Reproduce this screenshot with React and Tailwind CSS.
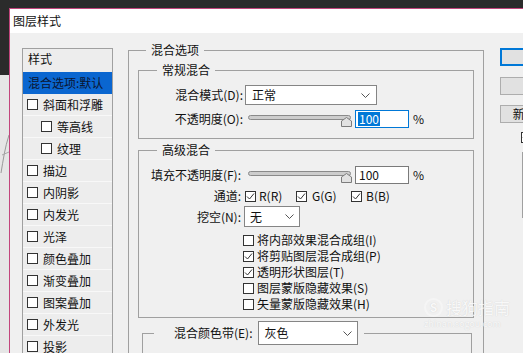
import React from 'react';

const Check = ({ checked, className = '' }) => (
  <span
    className={`w-[11px] h-[11px] shrink-0 border border-[#333] bg-white flex items-center justify-center ${className}`}
  >
    {checked && (
      <svg width="9" height="9" viewBox="0 0 9 9">
        <path d="M1 4.5 L3.5 7 L8 1.5" fill="none" stroke="#333" strokeWidth="1" />
      </svg>
    )}
  </span>
);

const Chevron = () => (
  <svg width="9" height="5" viewBox="0 0 9 5" className="shrink-0">
    <path d="M0.5 0.5 L4.5 4.5 L8.5 0.5" fill="none" stroke="#555" strokeWidth="1" />
  </svg>
);

const Select = ({ text, className = '' }) => (
  <div
    className={`shrink-0 border border-[#858585] bg-white flex items-center justify-between pl-[5px] pr-[5px] ${className}`}
  >
    <span>{text}</span>
    <Chevron />
  </div>
);

const Slider = () => (
  <div className="relative ml-[5px] w-[105px] h-[18px] shrink-0">
    <div className="absolute left-0 top-[5px] w-[103px] h-[5px] rounded-full border border-[#8a8a8a] bg-[#cdcdcd]" />
    <svg width="11" height="10" viewBox="0 0 11 10" className="absolute left-[93px] top-[7px]">
      <path d="M0.5 4 L5.5 0.5 L10.5 4 V9.5 H0.5 Z" fill="#e2e2e2" stroke="#7c7c7c" strokeWidth="1" />
    </svg>
  </div>
);

const listItems = [
  { label: '斜面和浮雕' },
  { label: '等高线', sub: true },
  { label: '纹理', sub: true },
  { label: '描边' },
  { label: '内阴影' },
  { label: '内发光' },
  { label: '光泽' },
  { label: '颜色叠加' },
  { label: '渐变叠加' },
  { label: '图案叠加' },
  { label: '外发光' },
  { label: '投影' },
];

const StyleList = () => (
  <div className="ml-[12px] mt-[15px] w-[91px] h-[400px] shrink-0 border border-[#a0a0a0] bg-[#ededed]">
    <div className="h-[23px] flex items-start pt-[2px] pl-[5px]">样式</div>
    <div className="h-[22px] flex items-center pl-[5px] bg-[#0a66d0] text-[#0a1530]">混合选项:默认</div>
    {listItems.map(({ label, sub }) => (
      <div
        key={label}
        className={`h-[22px] flex items-center border-b border-[#f8f8f8] ${sub ? 'pl-[18px]' : 'pl-[4px]'}`}
      >
        <Check />
        <span className="ml-[5px]">{label}</span>
      </div>
    ))}
  </div>
);

const advancedChecks = [
  { label: '将内部效果混合成组(I)', checked: false },
  { label: '将剪贴图层混合成组(P)', checked: true },
  { label: '透明形状图层(T)', checked: true },
  { label: '图层蒙版隐藏效果(S)', checked: false },
  { label: '矢量蒙版隐藏效果(H)', checked: false },
];

const MainPanel = () => (
  <fieldset className="ml-[15px] mt-[9px] w-[356px] h-[330px] shrink-0 border border-[#a0a0a0]">
    <legend className="ml-[17px] px-[5px]">混合选项</legend>

    <fieldset className="mx-[9px] mt-[4px] pb-[10px] border border-[#a0a0a0]">
      <legend className="ml-[18px] px-[5px]">常规混合</legend>
      <div className="mt-[7px] h-[20px] flex items-center">
        <span className="w-[104px] shrink-0 text-right">混合模式(D):</span>
        <Select text="正常" className="ml-[2px] w-[132px] h-[20px] pl-[6px] pr-[6px]" />
      </div>
      <div className="mt-[5px] h-[18px] flex items-center">
        <span className="w-[104px] shrink-0 text-right">不透明度(O):</span>
        <Slider />
        <div className="ml-[2px] w-[54px] h-[18px] shrink-0 border border-[#0078d7] bg-white flex items-center pl-[2px]">
          <span className="bg-[#0078d7] text-white px-[1px] leading-[14px]">100</span>
        </div>
        <span className="ml-[4px]">%</span>
      </div>
    </fieldset>

    <fieldset className="mx-[9px] mt-[3px] pb-[5px] border border-[#a0a0a0]">
      <legend className="ml-[18px] px-[5px]">高级混合</legend>
      <div className="mt-[8px] h-[18px] flex items-center">
        <span className="w-[104px] shrink-0 text-right pr-[2px]">填充不透明度(F):</span>
        <Slider />
        <div className="ml-[2px] w-[54px] h-[18px] shrink-0 border border-[#7a7a7a] bg-white flex items-center pl-[3px]">
          100
        </div>
        <span className="ml-[4px]">%</span>
      </div>
      <div className="mt-[5px] h-[14px] flex items-center">
        <span className="w-[104px] shrink-0 text-right pr-[2px]">通道:</span>
        <div className="ml-[2px] w-[51px] shrink-0 flex items-center">
          <Check checked />
          <span className="ml-[3px]">R(R)</span>
        </div>
        <div className="w-[55px] shrink-0 flex items-center">
          <Check checked />
          <span className="ml-[5px]">G(G)</span>
        </div>
        <div className="flex items-center">
          <Check checked />
          <span className="ml-[4px]">B(B)</span>
        </div>
      </div>
      <div className="mt-[3px] h-[21px] flex items-center">
        <span className="w-[104px] shrink-0 text-right pr-[2px]">挖空(N):</span>
        <Select text="无" className="ml-[1px] w-[56px] h-[21px] pl-[5px] pr-[4px]" />
      </div>
      <div className="mt-[5px]">
        {advancedChecks.map(({ label, checked }) => (
          <div key={label} className="h-[16px] flex items-center pl-[104px]">
            <Check checked={checked} />
            <span className="ml-[3px]">{label}</span>
          </div>
        ))}
      </div>
    </fieldset>

    <fieldset className="ml-[13px] mr-[11px] mt-[3px] h-[60px] border border-[#a0a0a0]">
      <legend className="ml-[11px] pl-[20px] pr-[6px]">
        <div className="flex items-center">
          <span>混合颜色带(E):</span>
          <Select text="灰色" className="ml-[5px] w-[100px] h-[24px] pl-[6px] pr-[4px]" />
        </div>
      </legend>
    </fieldset>
  </fieldset>
);

const RightColumn = () => (
  <div className="ml-[16px] mt-[15px] w-[102px] shrink-0 flex flex-col">
    <div className="h-[18px] border-2 border-[#0078d7] bg-[#e1e1e1] flex items-center justify-center">确定</div>
    <div className="mt-[11px] h-[18px] border border-[#adadad] bg-[#e1e1e1] flex items-center justify-center">取消</div>
    <div className="mt-[10px] h-[18px] border border-[#adadad] bg-[#e1e1e1] flex items-center justify-center">
      新建样式(W)...
    </div>
    <div className="mt-[8px] ml-[21px] h-[12px] flex items-center">
      <Check checked />
      <span className="ml-[4px]">预览(V)</span>
    </div>
    <div className="mt-[9px] ml-[22px] w-[70px] h-[66px] border border-[#a0a0a0] bg-[#f0f0f0]" />
  </div>
);

const LeftEdge = () => (
  <div className="w-[9px] shrink-0 flex flex-col">
    <div className="h-[75px] bg-[#2b2b2b]" />
    <div className="flex-1 bg-[#e6e6e6]">
      <svg width="9" height="60" viewBox="0 0 9 60" className="mt-[50px]">
        <path d="M1 48 C3 36 5 22 9 10" fill="none" stroke="#9a9a9a" strokeWidth="1" />
        <path d="M2 30 L9 27" fill="none" stroke="#a8a8a8" strokeWidth="1" />
      </svg>
    </div>
  </div>
);

const Watermark = () => (
  <div className="absolute left-[424px] top-[297px] flex flex-col text-[#fbfbfb] opacity-80 [text-shadow:0_0_1px_#c4c4c4]">
    <div className="flex items-center">
      <span className="w-[19px] h-[19px] rounded-full border-2 border-[#f7f7f7] flex items-center justify-center text-[12px] font-bold">
        S
      </span>
      <span className="ml-[3px] text-[16px] leading-[20px]">搜狗指南</span>
    </div>
    <div className="mt-[1px] text-[9px] leading-[11px]">zhinan.sogou.com</div>
  </div>
);

export default function App() {
  return (
    <div className="relative flex w-[523px] h-[353px] overflow-hidden bg-[#2b2b2b] font-['Noto_Sans_CJK_SC',sans-serif] text-[12px] leading-[16px] text-[#111]">
      <LeftEdge />
      <div className="flex-1 min-w-0 mt-[8px] flex flex-col border-l border-t border-[#c2457c]">
        <div className="h-[24px] shrink-0 bg-white flex items-center pl-[3px]">图层样式</div>
        <div className="flex-1 bg-[#f0f0f0] flex items-start">
          <StyleList />
          <MainPanel />
          <RightColumn />
        </div>
      </div>
      <Watermark />
    </div>
  );
}
